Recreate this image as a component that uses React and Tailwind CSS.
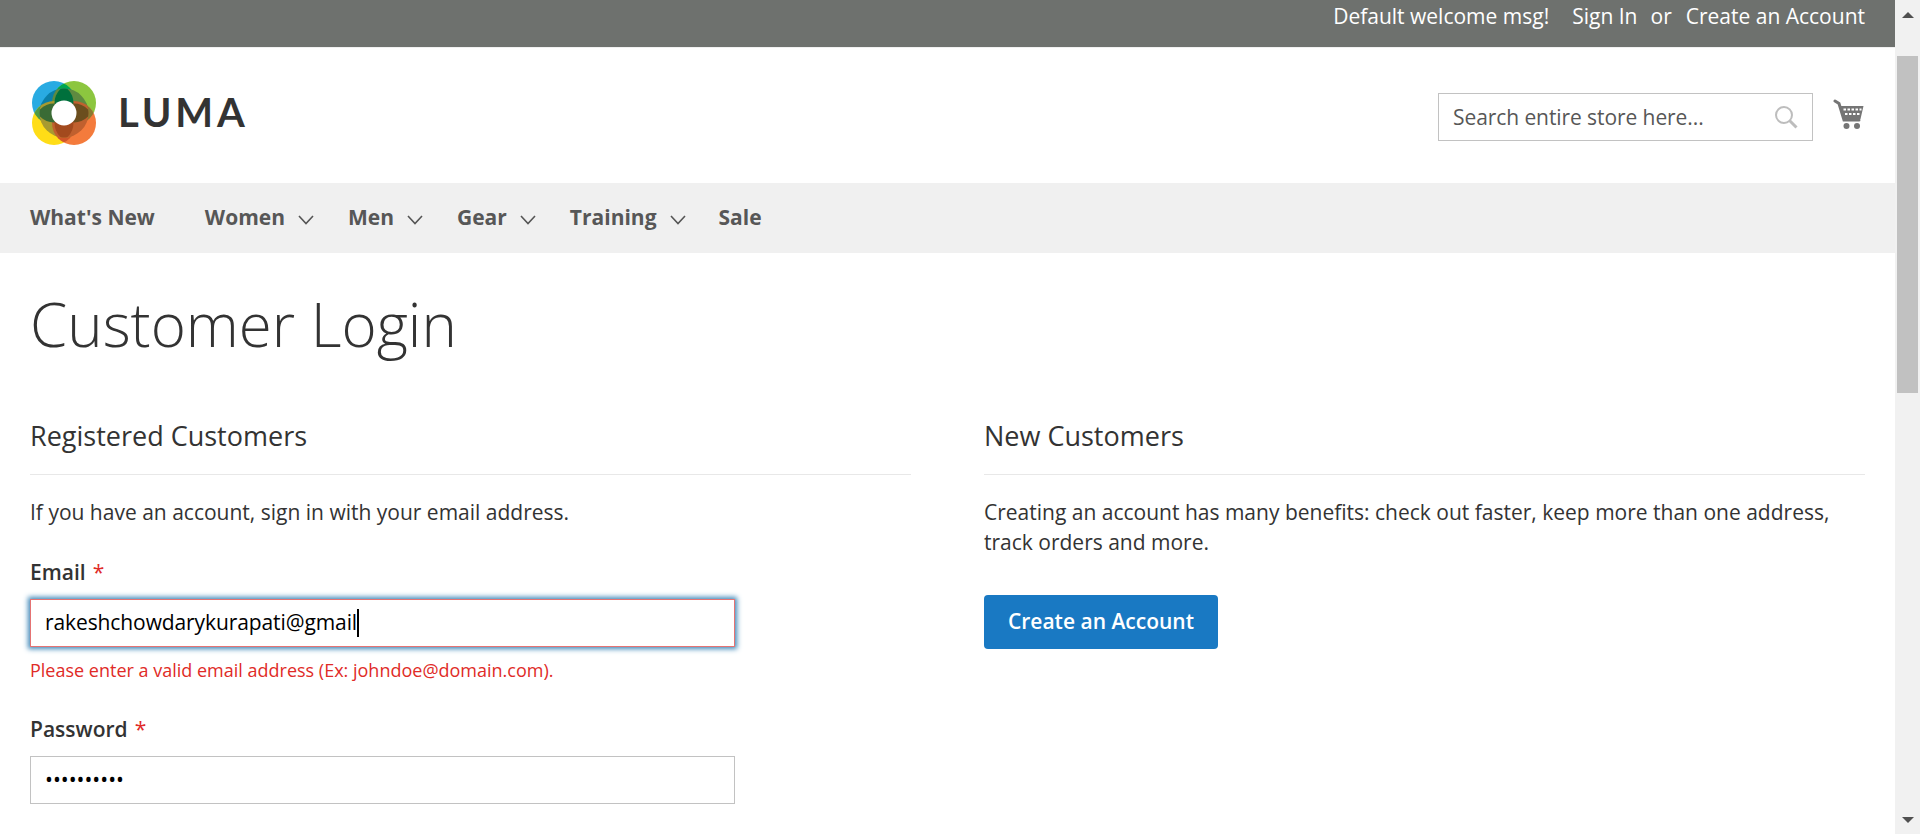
import React from "react";

const Chevron = () => (
  <svg width="16" height="10" viewBox="0 0 16 10" fill="none" stroke="#555" strokeWidth="1.6" className="ml-[13px] mt-[3px]">
    <path d="M1 1 L8 8.5 L15 1" />
  </svg>
);

const LogoLayer = ({ fills, lens, r, a, o }) => (
  <>
    <circle cx="22" cy="22" r="22" fill={fills[0]} />
    <circle cx="42" cy="22" r="22" fill={fills[1]} />
    <circle cx="22" cy="42" r="22" fill={fills[2]} />
    <circle cx="42" cy="42" r="22" fill={fills[3]} />
    <g clipPath={a}><circle cx="42" cy="22" r={r} fill={lens[0]} /></g>
    <g clipPath={a}><circle cx="22" cy="42" r={r} fill={lens[1]} /></g>
    <g clipPath={o}><circle cx="42" cy="22" r={r} fill={lens[2]} /></g>
    <g clipPath={o}><circle cx="22" cy="42" r={r} fill={lens[3]} /></g>
  </>
);

const Logo = () => (
  <svg width="64" height="64" viewBox="0 0 64 64" className="shrink-0">
    <defs>
      <clipPath id="lb"><circle cx="22" cy="22" r="22" /></clipPath>
      <clipPath id="lo"><circle cx="42" cy="42" r="22" /></clipPath>
      <clipPath id="lb2"><circle cx="22" cy="22" r="19.5" /></clipPath>
      <clipPath id="lo2"><circle cx="42" cy="42" r="19.5" /></clipPath>
      <clipPath id="ld"><circle cx="32" cy="32" r="24.5" /></clipPath>
    </defs>
    <LogoLayer r="22" a="url(#lb)" o="url(#lo)" fills={["#29ABE2", "#8CC63F", "#FFDD17", "#F47B3C"]} lens={["#00a651", "#4f9a45", "#8a7a30", "#d0562a"]} />
    <g clipPath="url(#ld)">
      <LogoLayer r="19.5" a="url(#lb2)" o="url(#lo2)" fills={["#0a7fa8", "#5f8a40", "#a89a30", "#c0602e"]} lens={["#00703c", "#3a6b35", "#6b4e1e", "#a34a1e"]} />
    </g>
    <circle cx="32" cy="32" r="12.5" fill="#fff" />
  </svg>
);

const Cart = () => (
  <svg width="31" height="32" viewBox="0 0 31 32" className="shrink-0">
    <path d="M2 3 L6 5.5 L11 22 L26 22" fill="none" stroke="#757575" strokeWidth="3" strokeLinecap="round" />
    <path fillRule="evenodd" fill="#757575" d="M7 8 H30.5 L27.5 21 H11 Z M10.5 10.5 v2 h2.5 v-2 Z M14.5 10.5 v2 h2.5 v-2 Z M18.5 10.5 v2 h2.5 v-2 Z M22.5 10.5 v2 h2.5 v-2 Z M26.5 10.5 v2 h2 v-2 Z M12 15 v2 h2.5 v-2 Z M16 15 v2 h2.5 v-2 Z M20 15 v2 h2.5 v-2 Z M24 15 v2 h2.5 v-2 Z" />
    <circle cx="13.5" cy="28" r="3" fill="#757575" />
    <circle cx="24" cy="28" r="3" fill="#757575" />
  </svg>
);

const Search = () => (
  <svg width="24" height="24" viewBox="0 0 24 24" fill="none" stroke="#bdbdbd" className="shrink-0">
    <circle cx="10" cy="10" r="8" strokeWidth="2" />
    <path d="M15.5 15.5 L22.5 22.5" strokeWidth="3" />
  </svg>
);

const NavItem = ({ label, className = "" }) => (
  <div className={`flex items-center ${className}`}>
    <span>{label}</span>
    <Chevron />
  </div>
);

const Scrollbar = () => (
  <div className="w-[25px] shrink-0 bg-[#f1f1f1] flex flex-col items-center h-full">
    <div className="h-[30px] flex items-center justify-center">
      <div className="w-0 h-0 border-l-[6px] border-r-[6px] border-b-[6px] border-l-transparent border-r-transparent border-b-[#505050]" />
    </div>
    <div className="w-[21px] h-[337px] mt-[26px] bg-[#c1c1c1]" />
    <div className="flex-1" />
    <div className="h-[28px] flex items-center justify-center">
      <div className="w-0 h-0 border-l-[6px] border-r-[6px] border-t-[6px] border-l-transparent border-r-transparent border-t-[#505050]" />
    </div>
  </div>
);

export default function App() {
  return (
    <div className="h-screen w-full flex overflow-hidden bg-white text-[#333] text-[21px] font-['Open_Sans',sans-serif]">
      <div className="flex-1 min-w-0 flex flex-col">
        <div className="h-[47px] shrink-0 bg-[#6e716e] text-white flex justify-end items-start pt-[1px] pr-[30px] leading-[30px]">
          <span>Default welcome msg!</span>
          <span className="ml-[23px]">Sign In</span>
          <span className="ml-[13px]">or</span>
          <span className="ml-[14px]">Create an Account</span>
        </div>
        <div className="h-[136px] shrink-0 border-t border-[#f0f0f0] flex items-start justify-between pl-[32px] pr-[31px]">
          <div className="flex items-center mt-[33px]">
            <Logo />
            <span className="ml-[22px] font-['Lato',sans-serif] font-bold text-[40px] tracking-[3.8px] leading-none text-[#333] -translate-y-[1px]">LUMA</span>
          </div>
          <div className="flex items-start">
            <div className="mt-[45px] w-[375px] h-[48px] border border-[#c2c2c2] flex items-center justify-between pl-[14px] pr-[14px] text-[#575757]">
              <span className="pt-[1px] tracking-[-0.08px]">Search entire store here...</span>
              <Search />
            </div>
            <div className="ml-[20px] mt-[50px]"><Cart /></div>
          </div>
        </div>
        <div className="h-[70px] shrink-0 bg-[#f0f0f0] flex items-center pl-[30px] font-bold text-[#575757]">
          <span>What's New</span>
          <NavItem label="Women" className="ml-[50px]" />
          <NavItem label="Men" className="ml-[34px]" />
          <NavItem label="Gear" className="ml-[34px]" />
          <NavItem label="Training" className="ml-[34px]" />
          <span className="ml-[33px]">Sale</span>
        </div>
        <div className="pl-[30px] pr-[30px] flex-1 min-h-0">
          <h1 className="font-light text-[60px] leading-[72px] mt-[35px] text-[#333]">Customer Login</h1>
          <div className="flex gap-[73px] mt-[58px]">
            <div className="flex-1 min-w-0">
              <h2 className="font-normal text-[27px] leading-[36px] pb-[20px] border-b border-[#e8e8e8]">Registered Customers</h2>
              <p className="mt-[22px] leading-[30px]">If you have an account, sign in with your email address.</p>
              <div className="mt-[30px] font-semibold leading-[30px]">Email<span className="ml-[7px] text-[#e02b27] font-normal">*</span></div>
              <div className="mt-[12px] w-[705px] h-[48px] border border-[#e57373] shadow-[0_0_5px_2px_#3f88b8] flex items-center pl-[14px] text-black">
                <span className="tracking-[-0.1px]">rakeshchowdarykurapati@gmail</span>
                <span className="w-[2px] h-[28px] bg-black" />
              </div>
              <div className="mt-[9px] text-[18px] leading-[28px] text-[#e02b27]">Please enter a valid email address (Ex: johndoe@domain.com).</div>
              <div className="mt-[30px] font-semibold leading-[30px]">Password<span className="ml-[7px] text-[#e02b27] font-normal">*</span></div>
              <div className="mt-[12px] w-[705px] h-[48px] border border-[#c2c2c2] flex items-center pl-[14px] text-black">
                <span>••••••••••</span>
              </div>
            </div>
            <div className="flex-1 min-w-0">
              <h2 className="font-normal text-[27px] leading-[36px] pb-[20px] border-b border-[#e8e8e8]">New Customers</h2>
              <p className="mt-[22px] leading-[30px]">Creating an account has many benefits: check out faster, keep more than one address, track orders and more.</p>
              <button className="mt-[38px] w-[234px] h-[54px] bg-[#1979c3] text-white font-semibold rounded-[4px] flex items-center justify-center">Create an Account</button>
            </div>
          </div>
        </div>
      </div>
      <Scrollbar />
    </div>
  );
}
